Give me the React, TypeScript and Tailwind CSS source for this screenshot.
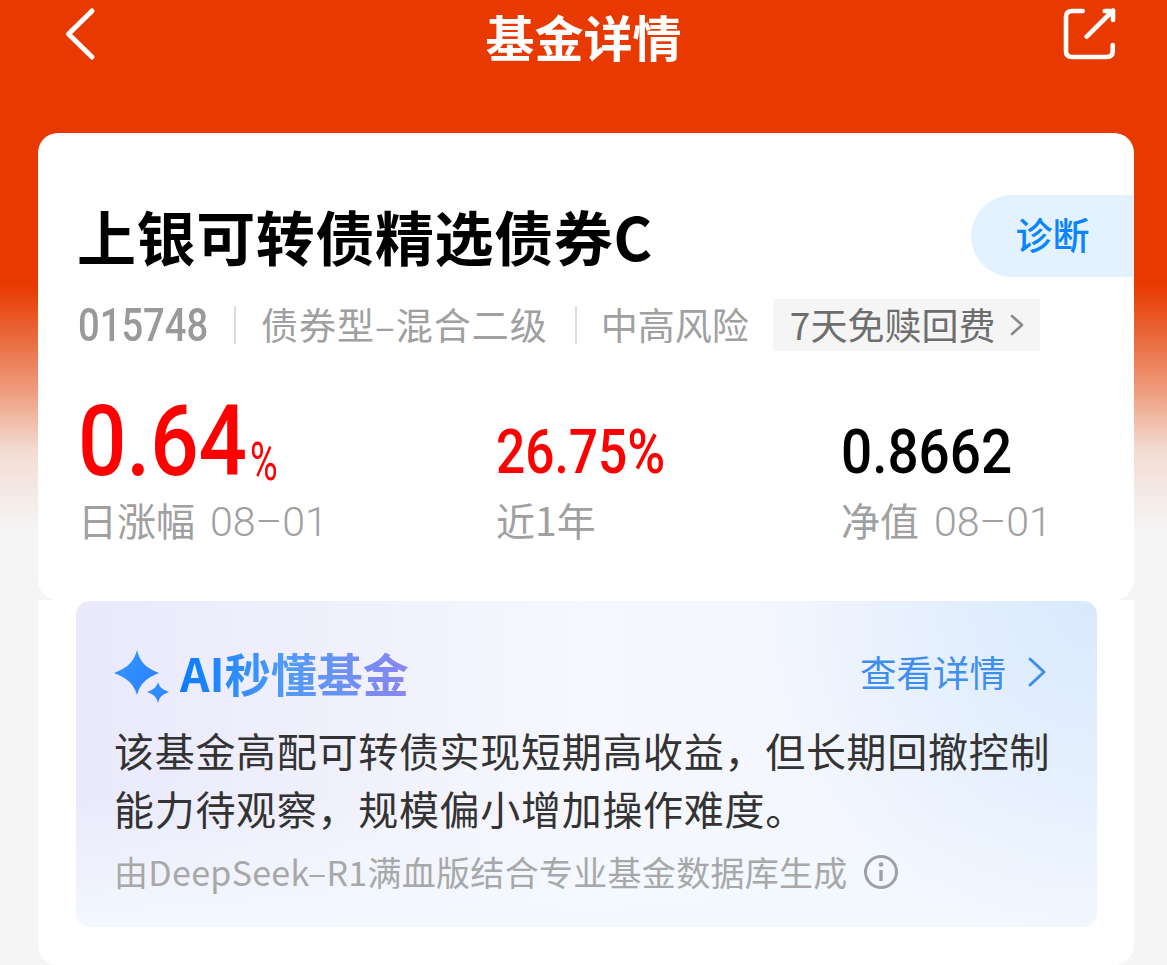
const cjk = 'font-["Noto_Sans_CJK_SC","Liberation_Sans",sans-serif]';
const din = 'font-["Roboto","Noto_Sans_CJK_SC",sans-serif]';

function Stat({ value, unit, label, date, valueClass, color }: { value: string; unit?: string; label: string; date?: string; valueClass: string; color: string }) {
  return (
    <div className="flex flex-col">
      <div className={`flex h-[89px] items-end ${din} font-medium ${color}`}>
        <span className={`inline-block origin-bottom-left whitespace-nowrap ${valueClass}`}>{value}</span>
        {unit && <span className="ml-[7px] inline-block w-[26px] origin-bottom-left scale-x-[0.7] text-[54px] leading-[44px] font-normal">{unit}</span>}
      </div>
      <div className="mt-[11px] flex items-baseline text-[39px] leading-[48px] text-[#a0a0a0]">
        <span>{label}</span>
        {date && <span className={`ml-[15px] ${din} text-[41px] font-light`}>{date}</span>}
      </div>
    </div>
  );
}

export default function App() {
  return (
    <div className={`h-[965px] w-[1167px] overflow-hidden bg-[linear-gradient(180deg,#e83a00_0px,#e83a00_285px,#ea6c3f_340px,#ee9c7c_390px,#f3dcd2_450px,#f5f5f5_530px,#f5f5f5_965px)] ${cjk}`}>
      <header className="flex h-[133px] items-start justify-between px-[51px] pt-[3px]">
        <svg width="56" height="56" viewBox="0 0 56 56" fill="none" className="mt-[4px] -mr-[9px] ml-[9px]">
          <path d="M32 4 L8.5 27 L32 50" stroke="#fff" strokeWidth="5" strokeLinecap="round" strokeLinejoin="round" />
        </svg>
        <div className="text-[49px] leading-[66px] font-bold text-white">基金详情</div>
        <svg width="56" height="56" viewBox="0 0 56 56" fill="none" className="mt-[5px]">
          <path d="M22.7 3 H12 Q6 3 6 9 V43 Q6 49 12 49 H46.7 Q52.7 49 52.7 43 V37" stroke="#fff" strokeWidth="4.6" strokeLinecap="round" />
          <path d="M26.7 28.7 L53 2.5 M44.7 3 H53 V12" stroke="#fff" strokeWidth="4.6" strokeLinecap="round" strokeLinejoin="round" />
        </svg>
      </header>

      <div className="ml-[38px] w-[1096px]">
        <section className="h-[467px] rounded-[20px] bg-white pt-[62px]">
          <div className="flex items-center justify-between pl-[39px]">
            <h1 className="text-[59px] leading-[82px] font-bold tracking-[0.6px] text-black">上银可转债精选债券C</h1>
            <div className="flex h-[82px] w-[163px] items-center justify-center rounded-l-full bg-[#e3f2fe] pb-[3px] text-[37px] font-medium text-[#0a84ff]">诊断</div>
          </div>

          <div className="mt-[22px] flex h-[52px] items-center pl-[40px] text-[37px] text-[#a0a0a0]">
            <span className={`inline-block w-[129px] origin-left scale-x-[0.83] ${din} text-[46px] leading-[52px] font-medium text-[#999999]`}>015748</span>
            <span className="mr-[25px] ml-[27px] h-[38px] w-[2px] bg-[#dddddd]" />
            <span className="tracking-[1px]">债券型–混合二级</span>
            <span className="mr-[24px] ml-[27px] h-[38px] w-[2px] bg-[#dddddd]" />
            <span>中高风险</span>
            <div className="ml-[24px] flex h-[52px] w-[267px] items-center bg-[#f5f5f5] pl-[17px] text-[37px] text-[#6e6e6e]">
              <span>7天免赎回费</span>
              <svg width="16" height="24" viewBox="0 0 16 24" fill="none" className="ml-[14px]">
                <path d="M3 3 L13 12 L3 21" stroke="#8a8a8a" strokeWidth="2.6" strokeLinecap="round" strokeLinejoin="round" />
              </svg>
            </div>
          </div>

          <div className="mt-[44px] grid grid-cols-[418px_345px_1fr] pl-[40px]">
            <Stat value="0.64" unit="%" label="日涨幅" date="08–01" color="text-[#fe0000]" valueClass="w-[165px] scale-x-[0.87] text-[98px] leading-[84px]" />
            <Stat value="26.75%" label="近1年" color="text-[#fe0000]" valueClass="mb-[1px] scale-x-[0.83] text-[62px] leading-[62px]" />
            <Stat value="0.8662" label="净值" date="08–01" color="text-black" valueClass="mb-[1px] scale-x-[0.885] text-[62px] leading-[62px]" />
          </div>
        </section>

        <section className="h-[365px] rounded-b-[20px] bg-white pt-[1px] pr-[37px] pl-[38px]">
          <div className="h-[326px] rounded-[14px] bg-[radial-gradient(circle_at_100%_0%,#d9e9fd_0%,rgba(217,233,253,0)_32%),linear-gradient(180deg,rgba(255,255,255,0)_60%,#f3f8ff_100%),linear-gradient(90deg,#e9e9fb_0%,#f7f7fe_50%,#f0f6fe_100%)] pt-[45px] pr-[37px] pl-[38px]">
            <div className="flex h-[52px] items-center justify-between">
              <div className="flex items-center">
                <svg width="56" height="56" viewBox="0 0 56 56" className="mt-[7px]">
                  <defs>
                    <linearGradient id="spark" x1="0" y1="0" x2="1" y2="1">
                      <stop offset="0" stopColor="#2f9bff" />
                      <stop offset="1" stopColor="#2f7cff" />
                    </linearGradient>
                  </defs>
                  <path d="M23 2 C26 14 32 20 45 25 C32 30 26 36 23 47 C20 36 13 30 0 25 C13 20 20 14 23 2 Z" fill="url(#spark)" />
                  <path d="M44 34 C45.5 39 48 41.5 55 44 C48 46.5 45.5 49 44 55 C42.5 49 40 46.5 33 44 C40 41.5 42.5 39 44 34 Z" fill="url(#spark)" />
                </svg>
                <span className="ml-[10px] bg-[linear-gradient(90deg,#0a7cff_0%,#4f9bf8_45%,#8b85f0_100%)] bg-clip-text text-[46px] leading-[52px] font-bold text-transparent">AI秒懂基金</span>
              </div>
              <div className="flex items-center text-[36.5px] text-[#3d8eee]">
                <span>查看详情</span>
                <svg width="20" height="32" viewBox="0 0 20 32" fill="none" className="mr-[13px] ml-[21px]">
                  <path d="M3 3 L17 16 L3 29" stroke="#3d8eee" strokeWidth="3" strokeLinecap="round" strokeLinejoin="round" />
                </svg>
              </div>
            </div>
            <p className="mt-[23px] text-[40px] leading-[58px] tracking-[0.7px] text-[#333333]">
              {'该基金高配可转债实现短期高收益\uFF0C但长期回撤控制能力待观察\uFF0C规模偏小增加操作难度。'}
            </p>
            <div className="mt-[7px] flex items-center text-[34px] leading-[56px] tracking-[0.3px] text-[#a8a8a8]">
              <span>由DeepSeek–R1满血版结合专业基金数据库生成</span>
              <svg width="36" height="36" viewBox="0 0 36 36" fill="none" className="ml-[15px]">
                <circle cx="18" cy="18" r="15.5" stroke="#a0a0a0" strokeWidth="3" />
                <circle cx="18" cy="10.5" r="2.3" fill="#a0a0a0" />
                <path d="M18 16 V27" stroke="#a0a0a0" strokeWidth="3.4" />
              </svg>
            </div>
          </div>
        </section>
      </div>
    </div>
  );
}
